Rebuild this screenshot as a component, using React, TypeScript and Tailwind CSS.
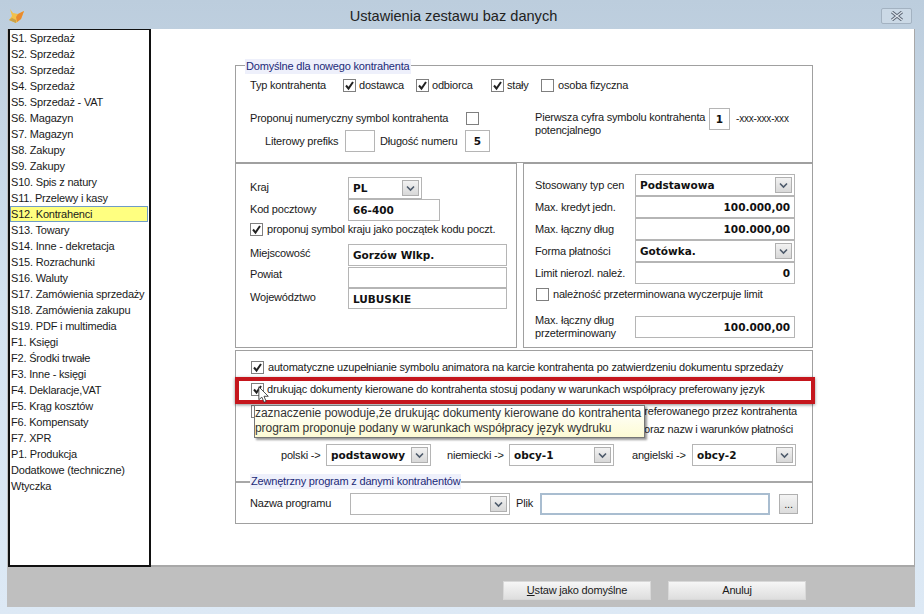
import type { ReactNode } from "react";

const sections = [
  "S1. Sprzedaż",
  "S2. Sprzedaż",
  "S3. Sprzedaż",
  "S4. Sprzedaż",
  "S5. Sprzedaż - VAT",
  "S6. Magazyn",
  "S7. Magazyn",
  "S8. Zakupy",
  "S9. Zakupy",
  "S10. Spis z natury",
  "S11. Przelewy i kasy",
  "S12. Kontrahenci",
  "S13. Towary",
  "S14. Inne - dekretacja",
  "S15. Rozrachunki",
  "S16. Waluty",
  "S17. Zamówienia sprzedaży",
  "S18. Zamówienia zakupu",
  "S19. PDF i multimedia",
  "F1. Księgi",
  "F2. Środki trwałe",
  "F3. Inne - księgi",
  "F4. Deklaracje,VAT",
  "F5. Krąg kosztów",
  "F6. Kompensaty",
  "F7. XPR",
  "P1. Produkcja",
  "Dodatkowe (techniczne)",
  "Wtyczka",
];

function Check({ on = false }: { on?: boolean }) {
  return (
    <span className="flex h-[13px] w-[13px] shrink-0 items-center justify-center border border-[#7f7f7f] bg-white">
      {on && (
        <svg width="11" height="11" viewBox="0 0 11 11">
          <path d="M2 5.5 L4.5 8.5 L9 2" fill="none" stroke="#222" strokeWidth="2" />
        </svg>
      )}
    </span>
  );
}

function Field({
  w,
  h = "h-[22px]",
  right = false,
  children,
}: {
  w: string;
  h?: string;
  right?: boolean;
  children?: ReactNode;
}) {
  return (
    <div
      className={`${w} ${h} flex shrink-0 items-center border border-[#b5b5b5] bg-white px-[4px] font-['DejaVu_Sans'] text-[10.5px] font-bold tracking-normal text-[#111] ${right ? "justify-end" : ""}`}
    >
      {children}
    </div>
  );
}

function Select({ w, value }: { w: string; value?: string }) {
  return (
    <div className={`${w} flex h-[22px] shrink-0 items-center justify-between border border-[#b5b5b5] bg-white pl-[4px] pr-[2px] font-['DejaVu_Sans'] text-[10.5px] font-bold tracking-normal text-[#111]`}>
      <span>{value}</span>
      <span className="flex h-[16px] w-[17px] items-center justify-center border border-[#b0b0b0] bg-gradient-to-b from-[#f2f2f2] to-[#d8d8d8]">
        <svg width="9" height="7" viewBox="0 0 9 7">
          <path d="M1 1.5 L4.5 5 L8 1.5" fill="none" stroke="#4d5a6b" strokeWidth="1.6" />
        </svg>
      </span>
    </div>
  );
}

function Legend({ children, left, top }: { children: ReactNode; left: string; top: string }) {
  return (
    <span className={`absolute ${left} ${top} bg-[#eef0fb] px-[1px] leading-[15px] text-[#1c2a78]`}>
      {children}
    </span>
  );
}

function Row({ label, children }: { label: string; children: ReactNode }) {
  return (
    <div className="flex items-center">
      <span className="w-[100px] shrink-0 pb-[1px]">{label}</span>
      {children}
    </div>
  );
}

function Fox() {
  return (
    <svg width="17" height="17" viewBox="0 0 17 17">
      <path d="M2 2 L5 6 L10 7 L16 4 L13 12 L8 16 L1 13 L4 9 Z" fill="#f2c14a" />
      <path d="M10 7 L16 4 L13 12 L9 15 L8 10 Z" fill="#e98a2e" />
      <path d="M1 13 L8 16 L8 13 L4 11 Z" fill="#c9a24a" />
    </svg>
  );
}

export default function App() {
  return (
    <div className="flex h-[614px] w-[924px] flex-col overflow-hidden whitespace-nowrap bg-gradient-to-b from-[#bccddd] via-[#d4e3f0] to-[#dde9f5] font-['Liberation_Sans',sans-serif] text-[11px] leading-[16px] tracking-[-0.19px] text-[#1a1a1a]">
      {/* title bar */}
      <div className="relative flex h-[29px] shrink-0 items-center justify-center pr-[17px] pt-[3px] text-[14.6px] tracking-normal text-[#222]">
        <span className="absolute left-[8px] top-[7px]">
          <Fox />
        </span>
        Ustawienia zestawu baz danych
        <span className="absolute right-[12px] top-[8px] flex h-[16px] w-[31px] items-center justify-center rounded-[2px] border border-[#a3b2c1] bg-[#cbd9e6]">
          <svg width="14" height="10" viewBox="0 0 14 10">
            <path d="M2 1 L12 9 M12 1 L2 9" stroke="#5b6675" strokeWidth="3.2" />
            <path d="M2 1 L12 9 M12 1 L2 9" stroke="#dfe7ef" strokeWidth="1.2" />
          </svg>
        </span>
      </div>

      <div className="ml-[7px] mr-[9px] flex h-[578px] flex-col bg-[#bfbfbf]">
        <div className="flex h-[538px] shrink-0">
          {/* section list */}
          <div className="ml-[1px] w-[143px] shrink-0 border-2 border-t border-[#111] bg-white">
            {sections.map((s) => (
              <div
                key={s}
                className={
                  s.startsWith("S12.")
                    ? "mr-[1px] h-[16px] border border-[#6f9cc6] bg-[#ffff80] leading-[14px]"
                    : "h-[16px] pl-[1px] leading-[16px]"
                }
              >
                {s}
              </div>
            ))}
          </div>

          {/* settings pane */}
          <div className="flex-1 border-b-2 border-r border-[#a8a8a8] bg-white pl-[84px] pt-[36px]">
            <div className="w-[578px]">
              {/* defaults */}
              <div className="relative h-[98px] border border-[#a0a0a0] pl-[14px] pt-[11px]">
                <Legend left="left-[9px]" top="top-[-7px]">Domyślne dla nowego kontrahenta</Legend>
                <div className="flex h-[16px] items-center">
                  <span className="w-[93px]">Typ kontrahenta</span>
                  <Check on />
                  <span className="ml-[3px] w-[57px]">dostawca</span>
                  <Check on />
                  <span className="ml-[3px] w-[59px]">odbiorca</span>
                  <Check on />
                  <span className="ml-[3px] w-[34px]">stały</span>
                  <Check />
                  <span className="ml-[4px]">osoba fizyczna</span>
                </div>
                <div className="flex">
                  <div className="w-[285px] shrink-0 pt-[17px]">
                    <div className="flex h-[16px] items-center">
                      <span className="w-[216px]">Proponuj numeryczny symbol kontrahenta</span>
                      <Check />
                    </div>
                    <div className="ml-[15px] mt-[4px] flex items-center">
                      <span className="w-[80px]">Literowy prefiks</span>
                      <Field w="w-[30px]" />
                      <span className="ml-[5px] w-[85px]">Długość numeru</span>
                      <Field w="w-[25px]">
                        <span className="w-full text-center">5</span>
                      </Field>
                    </div>
                  </div>
                  <div className="flex items-start pt-[15px]">
                    <span className="w-[174px] shrink-0 pt-[3px] leading-[13px]">
                      Pierwsza cyfra symbolu kontrahenta
                      <br />
                      potencjalnego
                    </span>
                    <Field w="w-[21px]">
                      <span className="w-full text-center">1</span>
                    </Field>
                    <span className="ml-[6px] pt-[3px] text-[10px]">-xxx-xxx-xxx</span>
                  </div>
                </div>
              </div>

              <div className="flex justify-between">
                {/* address */}
                <div className="h-[185px] w-[282px] border border-[#a0a0a0] pl-[14px] pt-[13px]">
                  <div className="flex items-center">
                    <span className="w-[98px] pb-[2px]">Kraj</span>
                    <Select w="w-[74px]" value="PL" />
                  </div>
                  <div className="flex items-center">
                    <span className="w-[98px] pb-[2px]">Kod pocztowy</span>
                    <Field w="w-[92px]">66-400</Field>
                  </div>
                  <div className="flex h-[16px] items-center">
                    <Check on />
                    <span className="ml-[4px]">proponuj symbol kraju jako początek kodu poczt.</span>
                  </div>
                  <div className="mt-[7px] flex items-center">
                    <span className="w-[98px] pb-[4px]">Miejscowość</span>
                    <Field w="w-[159px]">Gorzów Wlkp.</Field>
                  </div>
                  <div className="flex items-center">
                    <span className="w-[98px] pb-[6px]">Powiat</span>
                    <Field w="w-[159px]" h="h-[21px]" />
                  </div>
                  <div className="flex items-center">
                    <span className="w-[98px] pb-[3px]">Województwo</span>
                    <Field w="w-[159px]" h="h-[21px]">LUBUSKIE</Field>
                  </div>
                </div>

                {/* limits */}
                <div className="h-[185px] w-[290px] border border-[#a0a0a0] pl-[11px] pt-[10px]">
                  <Row label="Stosowany typ cen">
                    <Select w="w-[160px]" value="Podstawowa" />
                  </Row>
                  <Row label="Max. kredyt jedn.">
                    <Field w="w-[160px]" right>100.000,00</Field>
                  </Row>
                  <Row label="Max. łączny dług">
                    <Field w="w-[160px]" right>100.000,00</Field>
                  </Row>
                  <Row label="Forma płatności">
                    <Select w="w-[160px]" value="Gotówka." />
                  </Row>
                  <Row label="Limit nierozl. należ.">
                    <Field w="w-[160px]" right>0</Field>
                  </Row>
                  <div className="mt-[2px] flex h-[16px] items-center pl-[1px]">
                    <Check />
                    <span className="ml-[4px]">należność przeterminowana wyczerpuje limit</span>
                  </div>
                  <div className="mt-[12px] flex items-center">
                    <span className="w-[100px] shrink-0 leading-[13px]">
                      Max. łączny dług
                      <br />
                      przeterminowany
                    </span>
                    <Field w="w-[160px]" right>100.000,00</Field>
                  </div>
                </div>
              </div>

              {/* printing language */}
              <div className="relative mt-[2px] h-[174px] border border-[#a0a0a0] pt-[8px]">
                <div className="flex h-[16px] items-center pl-[15px]">
                  <Check on />
                  <span className="ml-[4px]">automatyczne uzupełnianie symbolu animatora na karcie kontrahenta po zatwierdzeniu dokumentu sprzedaży</span>
                </div>
                <div className="mt-[6px] flex h-[16px] items-center pl-[15px]">
                  <Check on />
                  <span className="ml-[3px]">drukując dokumenty kierowane do kontrahenta stosuj podany w warunkach współpracy preferowany język</span>
                </div>
                <div className="mt-[6px] flex h-[16px] items-center justify-between pl-[15px] pr-[15px]">
                  <Check />
                  <span>preferowanego przez kontrahenta</span>
                </div>
                <div className="mt-[2px] flex h-[16px] items-center justify-end pr-[19px]">
                  oraz nazw i warunków płatności
                </div>
                <div className="mt-[7px] flex items-center pl-[45px]">
                  <span className="w-[45px]">polski -&gt;</span>
                  <Select w="w-[105px]" value="podstawowy" />
                  <span className="ml-[16px] w-[62px]">niemiecki -&gt;</span>
                  <Select w="w-[105px]" value="obcy-1" />
                  <span className="ml-[18px] w-[60px]">angielski -&gt;</span>
                  <Select w="w-[104px]" value="obcy-2" />
                </div>

                {/* external program */}
                <div className="relative mt-[15px] h-[41px] border-t-2 border-[#a8a8a8] pl-[14px] pt-[10px]">
                  <Legend left="left-[14px]" top="top-[-9px]">Zewnętrzny program z danymi kontrahentów</Legend>
                  <div className="flex items-center">
                    <span className="w-[100px] pb-[2px]">Nazwa programu</span>
                    <Select w="w-[160px]" />
                    <span className="ml-[6px] w-[24px] pb-[2px]">Plik</span>
                    <div className="h-[22px] w-[230px] border-2 border-[#a9bdd0] bg-white" />
                    <div className="ml-[9px] flex h-[20px] w-[19px] items-center justify-center border border-[#b0b0b0] bg-gradient-to-b from-[#f4f4f4] to-[#dcdcdc] leading-[14px]">
                      ...
                    </div>
                  </div>
                </div>

                {/* highlight around the second option */}
                <div className="absolute left-[-1px] top-[26px] h-[27px] w-[580px] border-[4px] border-[#c5161d] shadow-[0_1px_3px_rgba(0,0,0,0.45)]" />

                {/* tooltip */}
                <div className="absolute left-[18px] top-[54px] h-[33px] w-[391px] border border-[#767676] bg-gradient-to-b from-[#ffffff] to-[#fdfbd4] text-[12px] leading-[15px] tracking-[-0.05px] text-[#333] shadow-[2px_2px_2px_rgba(0,0,0,0.4)]">
                  zaznaczenie powoduje,że drukując dokumenty kierowane do kontrahenta
                  <br />
                  program proponuje podany w warunkach współpracy język wydruku
                </div>

                {/* mouse cursor */}
                <svg className="absolute left-[22px] top-[35px]" width="12" height="18" viewBox="0 0 14 21">
                  <path d="M1 1 L1 16 L4.5 13 L7 19 L9.5 18 L7 12 L12 12 Z" fill="#fff" stroke="#333" strokeWidth="1" />
                </svg>
              </div>
            </div>
          </div>
        </div>

        {/* action buttons */}
        <div className="flex h-[40px] items-start pl-[496px] pt-[14px]">
          <button className="h-[19px] w-[148px] border border-[#d8d8d8] bg-gradient-to-b from-[#f6f6f6] to-[#dedede] leading-[17px]">
            <span className="underline">U</span>staw jako domyślne
          </button>
          <button className="ml-[17px] h-[19px] w-[138px] border border-[#d8d8d8] bg-gradient-to-b from-[#f6f6f6] to-[#dedede] leading-[17px]">
            Anuluj
          </button>
        </div>
      </div>
    </div>
  );
}
